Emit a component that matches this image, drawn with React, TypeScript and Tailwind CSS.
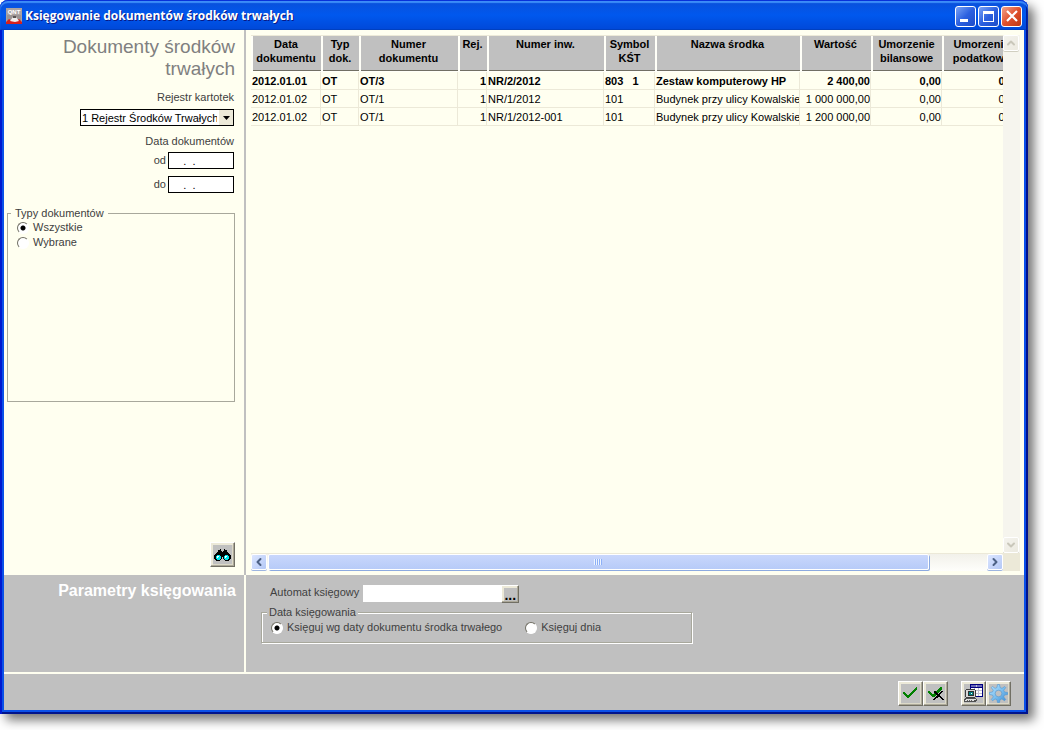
import React from 'react';
import { ChevronDown, ChevronLeft, ChevronRight, ChevronUp } from 'lucide-react';

const columns = [
  { label: 'Data dokumentu', width: 'w-[70px]', align: 'text-left' },
  { label: 'Typ dok.', width: 'w-[38px]', align: 'text-left' },
  { label: 'Numer dokumentu', width: 'w-[99px]', align: 'text-left' },
  { label: 'Rej.', width: 'w-[29px]', align: 'text-right' },
  { label: 'Numer inw.', width: 'w-[117px]', align: 'text-left' },
  { label: 'Symbol KŚT', width: 'w-[51px]', align: 'text-left' },
  { label: 'Nazwa środka', width: 'w-[145px]', align: 'text-left' },
  { label: 'Wartość', width: 'w-[71px]', align: 'text-right' },
  { label: 'Umorzenie bilansowe', width: 'w-[71px]', align: 'text-right' },
  { label: 'Umorzenie podatkowe', width: 'w-[79px]', align: 'text-right' },
];

const rows = [
  ['2012.01.01', 'OT', 'OT/3', '1', 'NR/2/2012', '803   1', 'Zestaw komputerowy HP', '2 400,00', '0,00', '0,00'],
  ['2012.01.02', 'OT', 'OT/1', '1', 'NR/1/2012', '101', 'Budynek przy ulicy Kowalskie', '1 000 000,00', '0,00', '0,00'],
  ['2012.01.02', 'OT', 'OT/1', '1', 'NR/1/2012-001', '101', 'Budynek przy ulicy Kowalskie', '1 200 000,00', '0,00', '0,00'],
];

const AppIcon = () => (
  <svg width="16" height="16" viewBox="0 0 16 16" aria-hidden="true">
    <rect width="16" height="16" fill="#aaa2a2" />
    <rect x="1" y="7" width="14" height="8" fill="#9c9494" />
    <text x="8" y="6" textAnchor="middle" fontSize="6" fontWeight="bold" fill="#fff">QNT</text>
    <path d="M0 16v-2l3-3 3 2h4l3-2 3 3v2z" fill="#d8201c" />
    <path d="M4 13l3-4h3l3 4-4 1z" fill="#f1eded" />
    <rect x="7" y="8" width="3" height="2" fill="#5a5454" />
  </svg>
);

const BinocularsIcon = () => (
  <svg width="17" height="12" viewBox="0 0 17 12" aria-hidden="true">
    <path d="M4 1h2v-1h1v2h1v1h1V2h1V0h1v1h2v2h1v1h1v1h1v1h1v4h-1v1h-1v1h-4v-1h-1v-1h-1V8H8v2H7v1H6v1H2v-1H1v-1H0V6h1V5h1V4h1V3h1z" fill="#000" />
    <path d="M3 6h3v1h1v3H6v1H3v-1H2V7h1zM11 6h3v1h1v3h-1v1h-3v-1h-1V7h1z" fill="#00e4ec" />
    <path d="M3 7h2v1H4v1H3zM11 7h2v1h-1v1h-1z" fill="#fff" />
  </svg>
);

const CheckIcon = () => (
  <svg width="15" height="12" viewBox="0 0 15 12" shapeRendering="crispEdges" aria-hidden="true">
    <path d="M0 5h2v1h1v1h1v1h2V7h1V6h1V5h1V4h1V3h1V2h1V1h1V0h1v3h-1v1h-1v1h-1v1h-1v1H9v1H8v1H7v1H6v1H4v-1H3V9H2V8H1V7H0z" fill="#008000" />
  </svg>
);

const CheckCancelIcon = () => (
  <svg width="16" height="13" viewBox="0 0 16 13" shapeRendering="crispEdges" aria-hidden="true">
    <path d="M0 4h2v1h1v1h1v1h2V6h1V5h1V4h1V3h1V2h1V1h1V0h2v3h-1v1h-1v1h-1v1h-1v1H9v1H8v1H7v1H4V9H3V8H2V7H1V6H0z" fill="#008000" />
    <path d="M6 4h2v1h1v1h1v1h1V6h1V5h1V4h2v1h-1v1h-1v1h-1v2h1v1h1v1h1v1h1v1h-2v-1h-1v-1h-1v-1h-2v1H8v1H7v1H5v-1h1v-1h1v-1h1V9h1V8H8V7H7V6H6z" fill="#000" />
  </svg>
);

const ComputerIcon = () => (
  <svg width="20" height="18" viewBox="0 0 20 18" shapeRendering="crispEdges" aria-hidden="true">
    <rect x="6" y="0" width="13" height="13" fill="#000080" />
    <rect x="7" y="1" width="11" height="2" fill="#6868b8" />
    <rect x="7" y="4" width="11" height="8" fill="#fff" />
    <path d="M7 6h11v1H7zM7 9h11v1H7zM10 4h1v8h-1zM14 4h1v8h-1zM12 1h1v2h-1z" fill="#c0c0d0" />
    <path d="M2 5h9v1h1v7h-1v1H2v-1H1V6h1z" fill="#404040" />
    <rect x="2" y="6" width="9" height="7" fill="#d8d8d8" />
    <rect x="4" y="7" width="6" height="5" fill="#303030" />
    <rect x="5" y="8" width="4" height="3" fill="#008080" />
    <rect x="7" y="9" width="1" height="1" fill="#fff" />
    <path d="M1 14h11v1h1v2h-1v1H0v-3h1z" fill="#505050" />
    <path d="M2 15h10v1H2zM1 16h9v1H1z" fill="#e0e0e0" />
    <path d="M3 16h1v1H3zM5 16h1v1H5zM7 16h1v1H7z" fill="#606060" />
  </svg>
);

const GearIcon = () => (
  <svg width="19" height="19" viewBox="0 0 20 20" aria-hidden="true">
    <defs>
      <linearGradient id="gear" x1="0" y1="0" x2="1" y2="1">
        <stop offset="0" stopColor="#b8e4ff" />
        <stop offset="0.5" stopColor="#7cc0f0" />
        <stop offset="1" stopColor="#3a88d0" />
      </linearGradient>
    </defs>
    <path
      fillRule="evenodd"
      d="M9 .5h2l.7 3.300 2 .8L16.500 2.700 17.600 3.800 15.500 6.500l.8 1.900 3.300.600v2l-3.300.7-.8 1.900 2.100 2.700-1.300 1.300-2.700-1.900-1.900.8-.7 3.100H9l-.7-3.100-1.900-.8-2.700 1.900-1.300-1.300 2.100-2.700-.8-1.900L.4 11V9l3.300-.6.8-1.900L2.400 3.800l1.300-1.200 2.700 2 1.900-.8zM10 6.500a3.500 3.500 0 1 0 0 7 3.500 3.500 0 0 0 0-7z"
      fill="url(#gear)"
      stroke="#4b94d2"
      strokeWidth="0.6"
    />
  </svg>
);

const ToolButton = ({ label, children }: { label: string; children: React.ReactNode }) => (
  <button
    type="button"
    aria-label={label}
    className="flex size-[25px] shrink-0 items-center justify-center border border-t-white border-l-white border-r-[#716f64] border-b-[#716f64] bg-[#c0c0c0] shadow-[inset_-1px_-1px_0_#aca899,inset_2px_2px_0_#ece9d8,inset_-2px_-2px_0_#dcd9c8]"
  >
    {children}
  </button>
);

const ScrollButton = ({ label, disabled, children }: { label: string; disabled?: boolean; children: React.ReactNode }) => (
  <button
    type="button"
    aria-label={label}
    disabled={disabled}
    className="flex size-4 shrink-0 items-center justify-center rounded-xs border border-white bg-linear-to-br from-[#dce6ff] to-[#b4c8f6] text-[#4d6185] shadow-[0_1px_0_#9db5e0] disabled:from-[#f4f3ee] disabled:to-[#eceae0] disabled:text-[#c9c7ba] disabled:shadow-[0_1px_0_#d0cec0]"
  >
    {children}
  </button>
);

const Radio = ({ name, label, checked }: { name: string; label: string; checked?: boolean }) => (
  <label className="flex h-[15px] items-center gap-1">
    <input
      type="radio"
      name={name}
      defaultChecked={checked}
      className="size-3 appearance-none rounded-full border border-t-[#716f64] border-l-[#716f64] border-r-white border-b-white bg-white checked:bg-[radial-gradient(circle,#000_2px,#fff_3px)]"
    />
    {label}
  </label>
);

const DateField = ({ id, label }: { id: string; label: string }) => (
  <div className="flex items-center justify-end gap-0.5">
    <label htmlFor={id}>{label}</label>
    <input id={id} type="text" defaultValue="    .  ." className="h-[17px] w-[66px] border border-black bg-white px-0.5 text-black" />
  </div>
);

const TitleBar = () => (
  <header className="flex h-[30px] shrink-0 items-center rounded-t-lg bg-linear-to-b from-[#0a4fd8] via-[#0058ee] to-[#0048d8] px-1.5 pt-0.5 shadow-[inset_0_1px_0_#0831d9,inset_0_3px_1px_#3c8cf8,inset_-2px_0_0_#001ea0,inset_0_-1px_0_#0040c0]">
    <AppIcon />
    <h1 className="ml-[3px] flex-1 truncate font-['Open_Sans',sans-serif] text-[12px] font-bold text-white [text-shadow:1px_1px_0_#0a1883]">
      Księgowanie dokumentów środków trwałych
    </h1>
    <div className="flex gap-0.5">
      <button type="button" aria-label="Minimalizuj" className="flex size-[21px] items-end rounded-[3px] border border-white bg-linear-to-br from-[#7ba2f4] via-[#2c60e0] to-[#1c4cc8] p-1">
        <span className="h-[3px] w-2 bg-white" />
      </button>
      <button type="button" aria-label="Maksymalizuj" className="flex size-[21px] items-center justify-center rounded-[3px] border border-white bg-linear-to-br from-[#7ba2f4] via-[#2c60e0] to-[#1c4cc8]">
        <span className="h-[11px] w-[11px] border border-t-[3px] border-white" />
      </button>
      <button type="button" aria-label="Zamknij" className="flex size-[21px] items-center justify-center rounded-[3px] border border-white bg-linear-to-br from-[#f0a088] via-[#e0502c] to-[#c03810]">
        <svg width="12" height="12" viewBox="0 0 12 12" aria-hidden="true">
          <path d="M1 1l10 10M11 1L1 11" stroke="#fff" strokeWidth="2.2" />
        </svg>
      </button>
    </div>
  </header>
);

const Sidebar = () => (
  <aside className="flex w-[242px] shrink-0 flex-col border-r-2 border-[#c0c0c0] pt-1.5 pr-[9px] pb-2 pl-[3px]">
    <h2 className="text-right text-[19px] leading-[22px] text-[#808080]">
      Dokumenty środków trwałych
    </h2>

    <div className="mt-2.5 flex flex-col items-end pr-px">
      <label htmlFor="rejestr" className="leading-[14px]">Rejestr kartotek</label>
      <div className="relative mt-[5px] flex">
        <select id="rejestr" className="h-[17px] w-[154px] appearance-none border border-black bg-white pr-4 pl-px leading-[14px] text-black">
          <option>1 Rejestr Środków Trwałych</option>
        </select>
        <span className="pointer-events-none absolute top-px right-px flex h-[15px] w-3.5 items-center justify-center bg-[#ece9d8]">
          <svg width="7" height="4" viewBox="0 0 7 4" aria-hidden="true">
            <path d="M0 0h7L3.500 4z" fill="#000" />
          </svg>
        </span>
      </div>
      <p className="mt-2 mb-1 leading-[14px]">Data dokumentów</p>
      <div className="flex flex-col gap-[7px]">
        <DateField id="data-od" label="od" />
        <DateField id="data-do" label="do" />
      </div>
    </div>

    <fieldset className="mt-[13px] h-[196px] border border-[#a8a89c] px-[9px]">
      <legend className="-ml-1.5 px-1 leading-[14px]">Typy dokumentów</legend>
      <Radio name="typy" label="Wszystkie" checked />
      <Radio name="typy" label="Wybrane" />
    </fieldset>

    <div className="mt-auto flex justify-end">
      <ToolButton label="Szukaj">
        <BinocularsIcon />
      </ToolButton>
    </div>
  </aside>
);

const DocumentsTable = () => (
  <section className="flex min-w-0 flex-1 flex-col pt-[5px] pr-1 pb-1 pl-[5px]">
    <div className="flex min-h-0 flex-1">
      <div className="min-w-0 flex-1 overflow-hidden border-t border-[#ece9d8]">
        <table className="w-[770px] table-fixed border-separate border-spacing-0 text-black">
          <thead>
            <tr>
              {columns.map((col) => (
                <th
                  key={col.label}
                  className={`${col.width} h-9 border-b border-l-2 border-[#fffff8] bg-[#c0c0c0] pt-px pr-0.5 text-center align-top leading-[14px] font-bold shadow-[inset_0_-1px_0_#716f64]`}
                >
                  {col.label}
                </th>
              ))}
            </tr>
          </thead>
          <tbody>
            {rows.map((row, i) => (
              <tr key={i} className={i === 0 ? 'font-bold' : ''}>
                {row.map((value, j) => (
                  <td key={j} className={`${columns[j].align} h-[18px] overflow-hidden border-r border-b border-[#ece9d8] pl-px leading-[14px] whitespace-pre`}>
                    {value}
                  </td>
                ))}
              </tr>
            ))}
          </tbody>
        </table>
      </div>
      <div className="flex w-[17px] flex-col justify-between bg-[#f6f5ee]">
        <ScrollButton label="Przewiń w górę" disabled><ChevronUp className="size-3" strokeWidth={4} /></ScrollButton>
        <ScrollButton label="Przewiń w dół" disabled><ChevronDown className="size-3" strokeWidth={4} /></ScrollButton>
      </div>
    </div>
    <div className="flex h-[18px] shrink-0">
      <div className="flex min-w-0 flex-1 border-t border-[#ece9d8] bg-linear-to-b from-[#f2f1ea] to-[#fefefb]">
        <ScrollButton label="Przewiń w lewo"><ChevronLeft className="size-3" strokeWidth={4} /></ScrollButton>
        <div className="min-w-0 flex-1 px-px">
          <div className="flex h-4 w-[92%] items-center justify-center rounded-xs border border-white bg-linear-to-b from-[#c9d7fc] to-[#b7cbf8] shadow-[1px_1px_0_#8caae0]">
            <span className="h-1.5 w-2 bg-[repeating-linear-gradient(90deg,#eef4fe_0_1px,#8cb0f8_1px_2px)]" />
          </div>
        </div>
        <ScrollButton label="Przewiń w prawo"><ChevronRight className="size-3" strokeWidth={4} /></ScrollButton>
      </div>
      <div className="w-[17px] bg-[#ece9d8]" />
    </div>
  </section>
);

const PostingParameters = () => (
  <section className="flex h-[99px] shrink-0 border-b-2 border-[#fffff0] bg-[#c0c0c0]">
    <h2 className="w-[242px] shrink-0 border-r-2 border-[#fffff0] pt-[5px] pr-2 text-right text-[16px] leading-[22px] font-bold text-white">
      Parametry księgowania
    </h2>
    <div className="min-w-0 flex-1 px-[15px] pt-2.5">
      <div className="flex items-start gap-1 pl-[9px]">
        <label htmlFor="automat" className="leading-[14px]">Automat księgowy</label>
        <div className="flex">
          <input id="automat" type="text" className="h-[17px] w-[138px] bg-white px-0.5 text-black" />
          <button
            type="button"
            className="flex size-[18px] items-end justify-center border border-t-white border-l-white border-r-[#716f64] border-b-[#716f64] text-[14px] leading-[14px] font-bold text-black shadow-[inset_-1px_-1px_0_#aca899,inset_2px_2px_0_#ece9d8]"
          >
            ...
          </button>
        </div>
      </div>
      <fieldset className="mt-0.5 w-[431px] max-w-full border border-[#a8a89c] px-[9px] pt-px pb-[7px] shadow-[1px_1px_0_#fff,inset_1px_1px_0_#fff]">
        <legend className="-ml-1 bg-[#c0c0c0] px-0.5 leading-[14px]">Data księgowania</legend>
        <div className="flex gap-[23px]">
          <Radio name="data-ksiegowania" label="Księguj wg daty dokumentu środka trwałego" checked />
          <Radio name="data-ksiegowania" label="Księguj dnia" />
        </div>
      </fieldset>
    </div>
  </section>
);

const App = () => {
  return (
    <div className="flex min-h-screen bg-white pr-4 pb-4 font-['Liberation_Sans',Arial,sans-serif] text-[11px] text-[#404040]">
      <div className="flex min-w-0 flex-1 flex-col rounded-t-lg bg-[#0a50e8] shadow-[6px_6px_11px_rgba(0,0,0,0.55)]">
        <TitleBar />
        <div className="flex flex-1 flex-col px-1 pb-1 shadow-[inset_2px_0_0_#0019cf,inset_-2px_-2px_0_#00138c]">
          <main className="flex flex-1 flex-col bg-[#fffff0]">
            <div className="flex flex-1">
              <Sidebar />
              <DocumentsTable />
            </div>
            <PostingParameters />
          </main>
          <footer className="flex h-9 shrink-0 items-center justify-end gap-[13px] bg-[#c0c0c0] pt-0.5 pr-[13px]">
            <div className="flex">
              <ToolButton label="Zatwierdź"><CheckIcon /></ToolButton>
              <ToolButton label="Anuluj zatwierdzenie"><CheckCancelIcon /></ToolButton>
            </div>
            <div className="flex">
              <ToolButton label="Podgląd"><ComputerIcon /></ToolButton>
              <ToolButton label="Ustawienia"><GearIcon /></ToolButton>
            </div>
          </footer>
        </div>
      </div>
    </div>
  );
};

export default App;
